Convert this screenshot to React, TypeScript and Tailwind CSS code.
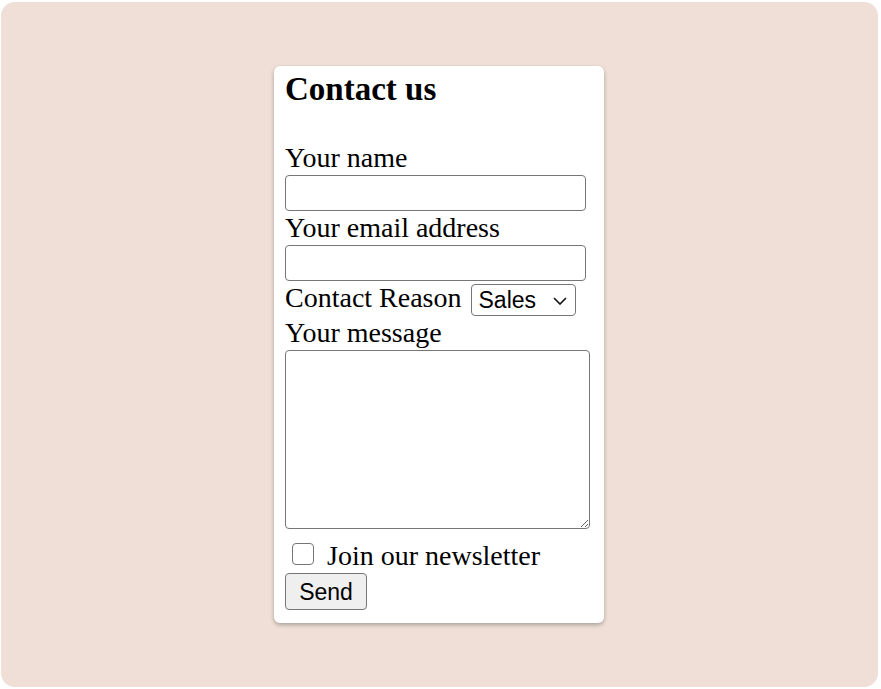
import { useState } from "react";

const fieldClass =
  "block bg-white border-[1.75px] border-[#767676] rounded-[4px] outline-none";

const ContactForm = () => {
  const [reason, setReason] = useState("sales");

  return (
    <form
      onSubmit={(e) => e.preventDefault()}
      className="w-[330px] bg-white rounded-md shadow-[0_2px_4px_rgba(0,0,0,0.28)] pt-[4px] pb-[13px] pl-[11px] pr-[14px] text-black font-['Liberation_Serif',serif] text-[28px]"
    >
      <h3 className="text-[33px] leading-[38px] font-bold">Contact us</h3>

      <label htmlFor="name" className="block mt-[34px] leading-[32px]">
        Your name
      </label>
      <input id="name" type="text" className={`${fieldClass} mt-px w-[301px] h-[36px]`} />

      <label htmlFor="email" className="block mt-px leading-[32px]">
        Your email address
      </label>
      <input id="email" type="email" className={`${fieldClass} mt-px w-[301px] h-[36px]`} />

      <div className="flex items-start mt-px h-[34px]">
        <label htmlFor="reason" className="leading-[32px] whitespace-nowrap">
          Contact Reason
        </label>
        <div className="relative ml-[9px] mt-[2px]">
          <select
            id="reason"
            value={reason}
            onChange={(e) => setReason(e.target.value)}
            className={`${fieldClass} appearance-none w-[105px] h-[32px] pl-[7px] pr-[30px] font-['Liberation_Sans',sans-serif] text-[23px] leading-[28px]`}
          >
            <option value="sales">Sales</option>
            <option value="support">Support</option>
            <option value="other">Other</option>
          </select>
          <svg
            className="absolute right-[9px] top-[13px] pointer-events-none"
            width="14"
            height="8"
            viewBox="0 0 14 8"
            fill="none"
          >
            <path d="M1 1l6 6 6-6" stroke="#111" strokeWidth="1.6" />
          </svg>
        </div>
      </div>

      <label htmlFor="message" className="block mt-px leading-[32px]">
        Your message
      </label>
      <textarea id="message" className={`${fieldClass} mt-px w-[305px] h-[179px]`} />

      <div className="flex items-start mt-[11px] h-[32px]">
        <input
          id="newsletter"
          type="checkbox"
          className="appearance-none shrink-0 w-[22px] h-[22px] mt-[3px] ml-[7px] bg-white border-[1.75px] border-[#767676] rounded-[4px]"
        />
        <label htmlFor="newsletter" className="ml-[13px] leading-[32px] whitespace-nowrap">
          Join our newsletter
        </label>
      </div>

      <button
        type="submit"
        className="block mt-px w-[82px] h-[37px] bg-[#efefef] border-[1.75px] border-[#767676] rounded-[4px] font-['Liberation_Sans',sans-serif] text-[23px] leading-[28px] text-black"
      >
        Send
      </button>
    </form>
  );
};

export default function App() {
  return (
    <div className="w-[881px] h-[689px] bg-white pt-[2px] pl-[1px]">
      <div className="w-[877px] h-[685px] rounded-[14px] bg-[#efdfd6] flex items-center justify-center pr-[1px]">
        <ContactForm />
      </div>
    </div>
  );
}
